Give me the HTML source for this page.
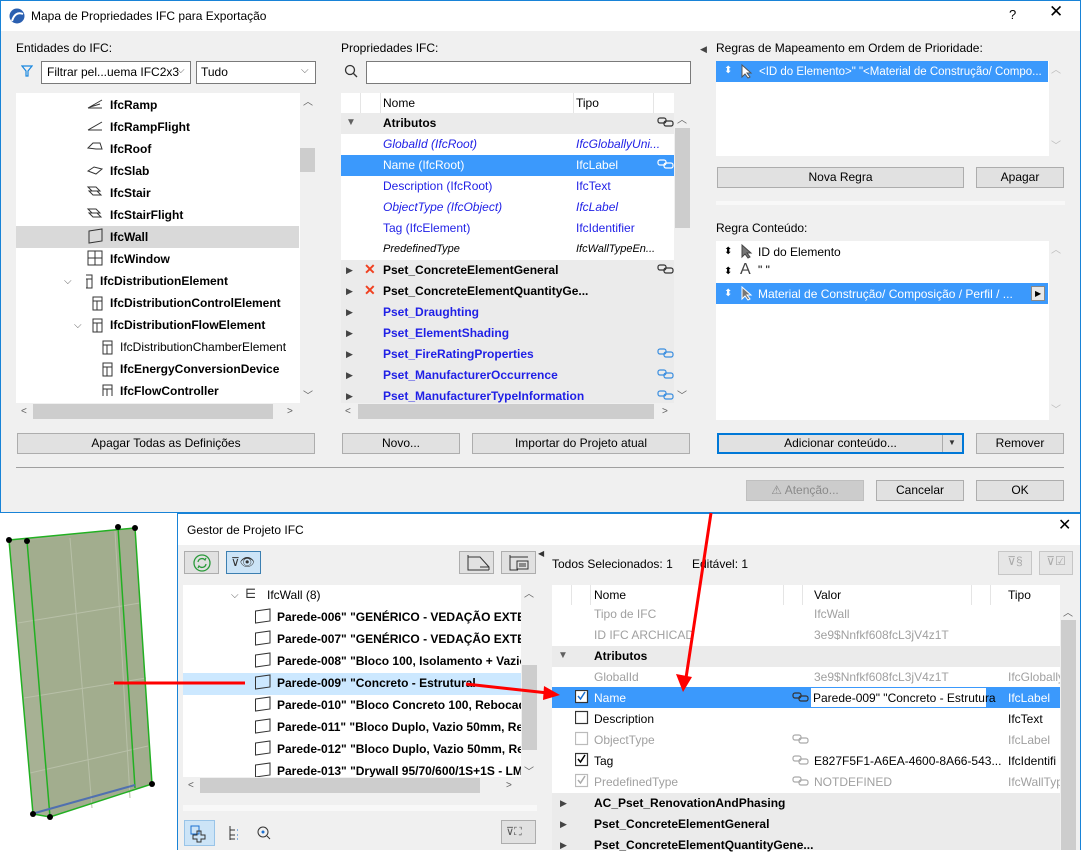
<!DOCTYPE html>
<html><head><meta charset="utf-8"><style>
*{margin:0;padding:0;box-sizing:border-box}
body{width:1081px;height:850px;position:relative;overflow:hidden;background:#fff;font-family:"Liberation Sans",sans-serif;font-size:12px;color:#000}
div,span{position:absolute}
.t{white-space:nowrap;line-height:14px}
.b{font-weight:bold}
.btn{background:#e1e1e1;border:1px solid #adadad;text-align:center;line-height:18px;white-space:nowrap}
.wh{background:#fff}
.bl{color:#1f1fe6}
.gr{color:#a0a0a0}
.sel{background:#3b99fc}
.sb{background:#f0f0f0}
.th{background:#cdcdcd}
.ar{font-size:10px;color:#606060}
</style></head><body>
<!-- top dialog -->
<div style="left:0;top:0;width:1081px;height:513px;background:#f0f0f0;border:1px solid #1883d7"></div>
<div class="wh" style="left:1px;top:1px;width:1079px;height:30px"></div>
<svg style="position:absolute;left:9px;top:8px" width="16" height="16"><circle cx="8" cy="8" r="7.5" fill="#2a5fb0"/><path d="M3 13 Q6 3 14 6" stroke="#fff" stroke-width="2" fill="none"/></svg>
<div class="t" style="left:31px;top:9px;font-size:12px">Mapa de Propriedades IFC para Exportação</div>
<div class="t" style="left:1009px;top:8px;font-size:13px">?</div>
<div class="t" style="left:1049px;top:5px;font-size:17px">✕</div>

<div class="t" style="left:16px;top:41px">Entidades do IFC:</div>
<svg style="position:absolute;left:21px;top:65px" width="12" height="12"><path d="M1 1H11L7 6V11H5V6Z" fill="none" stroke="#1a88e0" stroke-width="1.2"/></svg>
<div class="wh" style="left:41px;top:61px;width:150px;height:23px;border:1px solid #7a7a7a"></div>
<div class="t" style="left:47px;top:65px">Filtrar pel...uema IFC2x3</div>
<div class="t ar" style="left:177px;top:64px">⌵</div>
<div class="wh" style="left:196px;top:61px;width:120px;height:23px;border:1px solid #7a7a7a"></div>
<div class="t" style="left:201px;top:65px">Tudo</div>
<div class="t ar" style="left:301px;top:64px">⌵</div>

<div class="wh" style="left:16px;top:93px;width:284px;height:310px"></div>
<div style="left:16px;top:226px;width:283px;height:22px;background:#d9d9d9"></div>
<div class="sb" style="left:300px;top:93px;width:15px;height:310px"></div>
<div class="th" style="left:300px;top:148px;width:15px;height:24px"></div>
<div class="t ar" style="left:303px;top:96px">︿</div>
<div class="t ar" style="left:303px;top:390px">﹀</div>
<div class="sb" style="left:16px;top:403px;width:299px;height:17px"></div>
<div class="th" style="left:33px;top:404px;width:240px;height:15px"></div>
<div class="t ar" style="left:21px;top:405px">&lt;</div>
<div class="t ar" style="left:287px;top:405px">&gt;</div>

<div class="t b" style="left:110px;top:98px">IfcRamp</div>
<div class="t b" style="left:110px;top:120px">IfcRampFlight</div>
<div class="t b" style="left:110px;top:142px">IfcRoof</div>
<div class="t b" style="left:110px;top:164px">IfcSlab</div>
<div class="t b" style="left:110px;top:186px">IfcStair</div>
<div class="t b" style="left:110px;top:208px">IfcStairFlight</div>
<div class="t b" style="left:110px;top:230px">IfcWall</div>
<div class="t b" style="left:110px;top:252px">IfcWindow</div>
<div class="t b" style="left:100px;top:274px">IfcDistributionElement</div>
<div class="t b" style="left:110px;top:296px">IfcDistributionControlElement</div>
<div class="t b" style="left:110px;top:318px">IfcDistributionFlowElement</div>
<div class="t" style="left:120px;top:340px">IfcDistributionChamberElement</div>
<div class="t b" style="left:120px;top:362px">IfcEnergyConversionDevice</div>
<div class="t b" style="left:120px;top:384px">IfcFlowController</div>
<div class="t ar" style="left:64px;top:275px">⌵</div>
<div class="t ar" style="left:74px;top:319px">⌵</div>
<svg style="position:absolute;left:86px;top:96px" width="30" height="300" fill="none" stroke="#333" stroke-width="1">
<path d="M2 12L16 4M2 12H16M4 11L14 8"/><path d="M2 34L16 26M2 34H16"/>
<path d="M2 52L7 47H14L16 53H10Z"/><path d="M2 75L8 71L16 73L10 78Z"/>
<path d="M2 91H10L14 95H6ZM3 95H11L15 99H7Z"/><path d="M2 113H10L14 117H6ZM3 117H11L15 121H7Z"/>
<path d="M3 135L16 133V145L3 147Z"/><path d="M2 155H16V169H2ZM9 155V169M2 162H16"/>
<path d="M-3 179H6V192H-3ZM-3 183H6M1 183V192"/>
<path d="M7 201H16V214H7ZM7 205H16M11 205V214"/>
<path d="M7 223H16V236H7ZM7 227H16M11 227V236"/>
<path d="M17 245H26V258H17ZM17 249H26M21 249V258"/>
<path d="M17 267H26V280H17ZM17 271H26M21 271V280"/>
<path d="M17 289H26V302H17ZM17 293H26M21 293V302"/></svg>
<div class="btn" style="left:17px;top:433px;width:298px;height:21px">Apagar Todas as Definições</div>
<div style="left:16px;top:467px;width:1048px;height:1px;background:#a0a0a0"></div>

<!-- middle -->
<div class="t" style="left:341px;top:41px">Propriedades IFC:</div>
<svg style="position:absolute;left:344px;top:64px" width="14" height="14" fill="none" stroke="#333" stroke-width="1.3"><circle cx="6" cy="6" r="4.5"/><path d="M9.5 9.5L13 13"/></svg>
<div class="wh" style="left:366px;top:61px;width:325px;height:23px;border:1px solid #7a7a7a"></div>
<div class="wh" style="left:341px;top:93px;width:333px;height:20px"></div>
<div style="left:360px;top:93px;width:1px;height:20px;background:#e5e5e5"></div>
<div style="left:380px;top:93px;width:1px;height:20px;background:#e5e5e5"></div>
<div style="left:573px;top:93px;width:1px;height:20px;background:#e5e5e5"></div>
<div style="left:653px;top:93px;width:1px;height:20px;background:#e5e5e5"></div>
<div class="t" style="left:383px;top:96px">Nome</div>
<div class="t" style="left:576px;top:96px">Tipo</div>
<div style="left:341px;top:113px;width:333px;height:21px;background:#ebebeb"></div>
<div class="wh" style="left:341px;top:134px;width:333px;height:126px"></div>
<div class="sel" style="left:341px;top:155px;width:333px;height:21px"></div>
<div style="left:341px;top:260px;width:333px;height:143px;background:#ebebeb"></div>
<div class="t ar" style="left:346px;top:116px">▼</div>
<div class="t b" style="left:383px;top:116px">Atributos</div>
<div class="t bl" style="left:383px;top:137px;font-style:italic">GlobalId (IfcRoot)</div>
<div class="t bl" style="left:576px;top:137px;font-style:italic">IfcGloballyUni...</div>
<div class="t" style="left:383px;top:158px;color:#fff">Name (IfcRoot)</div>
<div class="t" style="left:576px;top:158px;color:#fff">IfcLabel</div>
<div class="t bl" style="left:383px;top:179px">Description (IfcRoot)</div>
<div class="t bl" style="left:576px;top:179px">IfcText</div>
<div class="t bl" style="left:383px;top:200px;font-style:italic">ObjectType (IfcObject)</div>
<div class="t bl" style="left:576px;top:200px;font-style:italic">IfcLabel</div>
<div class="t bl" style="left:383px;top:221px">Tag (IfcElement)</div>
<div class="t bl" style="left:576px;top:221px">IfcIdentifier</div>
<div class="t" style="left:383px;top:242px;font-style:italic;font-size:11px">PredefinedType</div>
<div class="t" style="left:576px;top:242px;font-style:italic;font-size:11px">IfcWallTypeEn...</div>
<div class="t b" style="left:383px;top:263px">Pset_ConcreteElementGeneral</div>
<div class="t b" style="left:383px;top:284px">Pset_ConcreteElementQuantityGe...</div>
<div class="t b bl" style="left:383px;top:305px">Pset_Draughting</div>
<div class="t b bl" style="left:383px;top:326px">Pset_ElementShading</div>
<div class="t b bl" style="left:383px;top:347px">Pset_FireRatingProperties</div>
<div class="t b bl" style="left:383px;top:368px">Pset_ManufacturerOccurrence</div>
<div class="t b bl" style="left:383px;top:389px">Pset_ManufacturerTypeInformation</div>
<div class="t" style="left:346px;top:263px;font-size:9px;color:#444">▶</div>
<div class="t" style="left:346px;top:284px;font-size:9px;color:#444">▶</div>
<div class="t" style="left:346px;top:305px;font-size:9px;color:#444">▶</div>
<div class="t" style="left:346px;top:326px;font-size:9px;color:#444">▶</div>
<div class="t" style="left:346px;top:347px;font-size:9px;color:#444">▶</div>
<div class="t" style="left:346px;top:368px;font-size:9px;color:#444">▶</div>
<div class="t" style="left:346px;top:389px;font-size:9px;color:#444">▶</div>
<div class="t b" style="left:364px;top:262px;color:#f04020;font-size:14px">✕</div>
<div class="t b" style="left:364px;top:283px;color:#f04020;font-size:14px">✕</div>
<svg style="position:absolute;left:657px;top:115px" width="18" height="290" fill="none" stroke-width="1.2">
<g stroke="#333"><rect x="1" y="3" width="8" height="5" rx="2"/><rect x="7" y="6" width="9" height="5" rx="2"/></g>
<g stroke="#fff" transform="translate(0,42)"><rect x="1" y="3" width="8" height="5" rx="2"/><rect x="7" y="6" width="9" height="5" rx="2"/></g>
<g stroke="#333" transform="translate(0,147)"><rect x="1" y="3" width="8" height="5" rx="2"/><rect x="7" y="6" width="9" height="5" rx="2"/></g>
<g stroke="#3a8ee0" transform="translate(0,231)"><rect x="1" y="3" width="8" height="5" rx="2"/><rect x="7" y="6" width="9" height="5" rx="2"/></g>
<g stroke="#3a8ee0" transform="translate(0,252)"><rect x="1" y="3" width="8" height="5" rx="2"/><rect x="7" y="6" width="9" height="5" rx="2"/></g>
<g stroke="#3a8ee0" transform="translate(0,273)"><rect x="1" y="3" width="8" height="5" rx="2"/><rect x="7" y="6" width="9" height="5" rx="2"/></g></svg>
<div class="sb" style="left:674px;top:113px;width:16px;height:290px"></div>
<div class="th" style="left:675px;top:128px;width:15px;height:100px"></div>
<div class="t ar" style="left:677px;top:114px">︿</div>
<div class="t ar" style="left:677px;top:390px">﹀</div>
<div class="sb" style="left:341px;top:403px;width:349px;height:17px"></div>
<div class="th" style="left:358px;top:404px;width:296px;height:15px"></div>
<div class="t ar" style="left:345px;top:405px">&lt;</div>
<div class="t ar" style="left:662px;top:405px">&gt;</div>
<div class="btn" style="left:342px;top:433px;width:118px;height:21px">Novo...</div>
<div class="btn" style="left:472px;top:433px;width:218px;height:21px">Importar do Projeto atual</div>

<!-- right -->
<div class="t" style="left:700px;top:42px;font-size:9px;color:#444">◀</div>
<div class="t" style="left:716px;top:41px">Regras de Mapeamento em Ordem de Prioridade:</div>
<div class="wh" style="left:716px;top:61px;width:333px;height:95px"></div>
<div class="sel" style="left:716px;top:61px;width:332px;height:21px"></div>
<div class="t" style="left:724px;top:64px;color:#fff;font-size:10px">⬍</div>
<div class="t" style="left:759px;top:65px;color:#fff;font-size:11.5px">&lt;ID do Elemento&gt;" "&lt;Material de Construção/ Compo...</div>
<div class="t" style="left:1051px;top:64px;color:#bbb;font-size:10px">︿</div>
<div class="t" style="left:1051px;top:140px;color:#bbb;font-size:10px">﹀</div>
<div class="btn" style="left:717px;top:167px;width:247px;height:21px">Nova Regra</div>
<div class="btn" style="left:976px;top:167px;width:88px;height:21px">Apagar</div>
<div style="left:716px;top:201px;width:349px;height:4px;background:#f8f8f8"></div>
<div class="t" style="left:716px;top:221px">Regra Conteúdo:</div>
<div class="wh" style="left:716px;top:241px;width:333px;height:179px"></div>
<div class="sel" style="left:716px;top:283px;width:332px;height:21px"></div>
<div class="t" style="left:724px;top:245px;font-size:10px">⬍</div>
<div class="t" style="left:724px;top:265px;font-size:10px">⬍</div>
<div class="t" style="left:724px;top:287px;font-size:10px;color:#fff">⬍</div>
<div class="t" style="left:758px;top:245px">ID do Elemento</div>
<div class="t" style="left:740px;top:263px;font-size:16px;color:#444">A</div>
<div class="t" style="left:758px;top:263px">" "</div>
<div class="t" style="left:758px;top:287px;color:#fff">Material de Construção/ Composição / Perfil / ...</div>
<div style="left:1031px;top:286px;width:14px;height:15px;background:#e8e8e8;border:1px solid #888"></div>
<div class="t" style="left:1035px;top:287px;font-size:8px">▶</div>
<svg style="position:absolute;left:740px;top:63px" width="16" height="240"><path d="M2 2V14L5 11L8 15L10 14L7 10H11Z" fill="#fff" stroke="#555"/><path d="M2 182V194L5 191L8 195L10 194L7 190H11Z" fill="#777" stroke="#444"/><path d="M2 224V236L5 233L8 237L10 236L7 232H11Z" fill="#777" stroke="#fff"/></svg>
<div class="t" style="left:1051px;top:244px;color:#bbb;font-size:10px">︿</div>
<div class="t" style="left:1051px;top:404px;color:#bbb;font-size:10px">﹀</div>
<div class="btn" style="left:717px;top:433px;width:247px;height:21px;border:2px solid #0078d7;line-height:17px">Adicionar conteúdo...</div>
<div style="left:942px;top:435px;width:1px;height:17px;background:#aaa"></div>
<div class="t" style="left:948px;top:436px;font-size:8px;color:#333">▼</div>
<div class="btn" style="left:976px;top:433px;width:88px;height:21px">Remover</div>
<div class="btn" style="left:746px;top:480px;width:118px;height:21px;background:#ccc;border-color:#bfbfbf;color:#8a8a8a">⚠ Atenção...</div>
<div class="btn" style="left:876px;top:480px;width:88px;height:21px">Cancelar</div>
<div class="btn" style="left:976px;top:480px;width:88px;height:21px">OK</div>

<!-- wall 3D -->
<svg style="position:absolute;left:0;top:513px" width="176" height="337">
<polygon points="9,27 135,15 152,271 50,304 33,301" fill="#a7b194"/>
<polygon points="27,28 135,15 152,271 50,304" fill="#a2ad8e"/>
<g stroke="#b8c0a8" stroke-width="1" fill="none"><path d="M18,110 L140,90M24,185L146,165M30,260L148,233M70,25L92,295M115,18L130,285"/></g>
<g stroke="#22b022" stroke-width="1.5" fill="none"><polygon points="9,27 135,15 152,271 50,304 33,301"/><path d="M27,28L50,304M118,14L135,275"/></g>
<path d="M35,300L135,272" stroke="#5070b0" stroke-width="2"/>
<g fill="#000"><circle cx="9" cy="27" r="3"/><circle cx="27" cy="28" r="3"/><circle cx="118" cy="14" r="3"/><circle cx="135" cy="15" r="3"/><circle cx="152" cy="271" r="3"/><circle cx="50" cy="304" r="3"/><circle cx="33" cy="301" r="3"/></g></svg>

<!-- bottom window -->
<div style="left:177px;top:513px;width:904px;height:337px;background:#f0f0f0;border:1px solid #1883d7;border-bottom:none"></div>
<div class="wh" style="left:178px;top:514px;width:902px;height:31px"></div>
<div class="t" style="left:187px;top:523px">Gestor de Projeto IFC</div>
<div class="t" style="left:1058px;top:519px;font-size:16px">✕</div>
<div class="btn" style="left:184px;top:551px;width:35px;height:23px"></div>
<svg style="position:absolute;left:193px;top:554px" width="18" height="18" fill="none" stroke="#2a9a3a" stroke-width="1.3"><circle cx="9" cy="9" r="8"/><path d="M5 8A4 4 0 0 1 12 6L13 4M13 10A4 4 0 0 1 6 12L5 14"/></svg>
<div class="btn" style="left:226px;top:551px;width:35px;height:23px;background:#cce4f7;border-color:#3c7fb1"></div>
<div class="t" style="left:231px;top:555px;font-size:12px;color:#333">⊽👁</div>
<div class="btn" style="left:459px;top:551px;width:35px;height:23px"></div>
<div class="btn" style="left:501px;top:551px;width:35px;height:23px"></div>
<svg style="position:absolute;left:464px;top:553px" width="70" height="20" fill="none" stroke="#333"><path d="M4 2V17H25M4 4H16L25 14V17M16 14H25"/><path d="M46 2V17H54M46 4H64M53 8H64V16H53ZM55 11H62M55 13H62"/></svg>
<div style="left:183px;top:585px;width:338px;height:192px;overflow:hidden;background:#fff">
<div style="left:0;top:88px;width:338px;height:22px;background:#cce8ff"></div>
<div class="t ar" style="left:48px;top:4px">⌵</div>
<div class="t" style="left:62px;top:2px;font-size:13px;color:#333">⋿</div>
<div class="t" style="left:84px;top:3px">IfcWall (8)</div>
<div class="t b" style="left:94px;top:25px">Parede-006" "GENÉRICO - VEDAÇÃO EXTERNA</div>
<div class="t b" style="left:94px;top:47px">Parede-007" "GENÉRICO - VEDAÇÃO EXTERNA</div>
<div class="t b" style="left:94px;top:69px">Parede-008" "Bloco 100, Isolamento + Vazio</div>
<div class="t b" style="left:94px;top:91px">Parede-009" "Concreto - Estrutural</div>
<div class="t b" style="left:94px;top:113px">Parede-010" "Bloco Concreto 100, Rebocado 2 I</div>
<div class="t b" style="left:94px;top:135px">Parede-011" "Bloco Duplo, Vazio 50mm, Reboca</div>
<div class="t b" style="left:94px;top:157px">Parede-012" "Bloco Duplo, Vazio 50mm, Reboca</div>
<div class="t b" style="left:94px;top:179px">Parede-013" "Drywall 95/70/600/1S+1S - LM</div>
<svg style="position:absolute;left:71px;top:22px" width="18" height="170" fill="none" stroke="#333"><g id="w"><path d="M1.5 4L16 2V14L1.5 16Z"/></g><use href="#w" y="22"/><use href="#w" y="44"/><use href="#w" y="66"/><use href="#w" y="88"/><use href="#w" y="110"/><use href="#w" y="132"/><use href="#w" y="154"/></svg>
</div>
<div class="sb" style="left:521px;top:585px;width:16px;height:192px"></div>
<div class="th" style="left:522px;top:665px;width:15px;height:85px"></div>
<div class="t ar" style="left:524px;top:588px">︿</div>
<div class="t ar" style="left:524px;top:766px">﹀</div>
<div class="sb" style="left:183px;top:777px;width:354px;height:17px"></div>
<div class="th" style="left:200px;top:778px;width:280px;height:15px"></div>
<div class="t ar" style="left:188px;top:779px">&lt;</div>
<div class="t ar" style="left:506px;top:779px">&gt;</div>
<div style="left:183px;top:805px;width:354px;height:6px;background:#f8f8f8"></div>
<div class="btn" style="left:184px;top:820px;width:31px;height:26px;background:#cce4f7;border-color:#99c4e8"></div>
<svg style="position:absolute;left:188px;top:823px" width="100" height="20" fill="none" stroke="#333"><path d="M3 3H11V11H3Z" stroke="#1a6fd0"/><path d="M9 8H13V12H17V16H13V19H9V16H5V12H9Z"/><path d="M42 3V17M42 7H47M42 12H47M42 16H47"/><path d="M49 7H50M49 12H50M49 16H50" stroke="#1a6fd0"/><circle cx="75" cy="9" r="5"/><circle cx="75" cy="9" r="1.5" fill="#1a6fd0" stroke="none"/><path d="M79 13L82 16"/></svg>
<div class="btn" style="left:501px;top:820px;width:35px;height:24px"></div>
<div class="t" style="left:506px;top:825px;font-size:11px;color:#555">⊽⛶</div>

<div style="left:537px;top:545px;width:15px;height:305px;background:#f0f0f0"></div>
<div class="t" style="left:538px;top:547px;font-size:8px;color:#333">◀</div>
<div class="t" style="left:552px;top:557px">Todos Selecionados: 1</div>
<div class="t" style="left:692px;top:557px">Editável: 1</div>
<div class="btn" style="left:998px;top:551px;width:34px;height:24px;background:#e6e6e6;border-color:#c6c6c6;color:#aaa">⊽§</div>
<div class="btn" style="left:1039px;top:551px;width:34px;height:24px;background:#e6e6e6;border-color:#c6c6c6;color:#aaa">⊽☑</div>
<div class="wh" style="left:552px;top:585px;width:508px;height:20px"></div>
<div style="left:571px;top:585px;width:1px;height:20px;background:#e5e5e5"></div>
<div style="left:590px;top:585px;width:1px;height:20px;background:#e5e5e5"></div>
<div style="left:783px;top:585px;width:1px;height:20px;background:#e5e5e5"></div>
<div style="left:802px;top:585px;width:1px;height:20px;background:#e5e5e5"></div>
<div style="left:971px;top:585px;width:1px;height:20px;background:#e5e5e5"></div>
<div style="left:990px;top:585px;width:1px;height:20px;background:#e5e5e5"></div>
<div class="t" style="left:594px;top:588px">Nome</div>
<div class="t" style="left:814px;top:588px">Valor</div>
<div class="t" style="left:1008px;top:588px">Tipo</div>
<div class="wh" style="left:552px;top:605px;width:508px;height:41px"></div>
<div style="left:552px;top:646px;width:508px;height:21px;background:#ebebeb"></div>
<div class="wh" style="left:552px;top:667px;width:508px;height:126px"></div>
<div class="sel" style="left:552px;top:687px;width:508px;height:21px"></div>
<div style="left:552px;top:793px;width:508px;height:57px;background:#ebebeb"></div>
<div class="t gr" style="left:594px;top:607px">Tipo de IFC</div>
<div class="t gr" style="left:814px;top:607px">IfcWall</div>
<div class="t gr" style="left:594px;top:628px">ID IFC ARCHICAD</div>
<div class="t gr" style="left:814px;top:628px">3e9$Nnfkf608fcL3jV4z1T</div>
<div class="t ar" style="left:558px;top:649px">▼</div>
<div class="t b" style="left:594px;top:649px">Atributos</div>
<div class="t gr" style="left:594px;top:670px">GlobalId</div>
<div class="t gr" style="left:814px;top:670px">3e9$Nnfkf608fcL3jV4z1T</div>
<div class="t gr" style="left:1008px;top:670px">IfcGlobally</div>
<div class="t" style="left:594px;top:691px;color:#fff">Name</div>
<div class="wh" style="left:811px;top:688px;width:175px;height:19px"></div>
<div class="t" style="left:813px;top:691px">Parede-009" "Concreto - Estrutura</div>
<div class="t" style="left:1008px;top:691px;color:#fff">IfcLabel</div>
<div class="t" style="left:594px;top:712px">Description</div>
<div class="t" style="left:1008px;top:712px">IfcText</div>
<div class="t gr" style="left:594px;top:733px">ObjectType</div>
<div class="t gr" style="left:1008px;top:733px">IfcLabel</div>
<div class="t" style="left:594px;top:754px">Tag</div>
<div class="t" style="left:814px;top:754px">E827F5F1-A6EA-4600-8A66-543...</div>
<div class="t" style="left:1008px;top:754px">IfcIdentifi</div>
<div class="t gr" style="left:594px;top:775px">PredefinedType</div>
<div class="t gr" style="left:814px;top:775px">NOTDEFINED</div>
<div class="t gr" style="left:1008px;top:775px">IfcWallTyp</div>
<div class="t b" style="left:594px;top:796px">AC_Pset_RenovationAndPhasing</div>
<div class="t b" style="left:594px;top:817px">Pset_ConcreteElementGeneral</div>
<div class="t b" style="left:594px;top:838px">Pset_ConcreteElementQuantityGene...</div>
<div class="t" style="left:560px;top:796px;font-size:9px;color:#444">▶</div>
<div class="t" style="left:560px;top:817px;font-size:9px;color:#444">▶</div>
<div class="t" style="left:560px;top:838px;font-size:9px;color:#444">▶</div>
<svg style="position:absolute;left:575px;top:690px" width="240" height="110" fill="none" stroke-width="1.2">
<rect x="0.5" y="0.5" width="12" height="12" fill="#fff" stroke="#333"/><path d="M3 6L5.5 9L10 2" stroke="#1a6fd0" stroke-width="1.5"/>
<rect x="0.5" y="21.5" width="12" height="12" fill="#fff" stroke="#333"/>
<rect x="0.5" y="42.5" width="12" height="12" stroke="#bbb"/>
<rect x="0.5" y="63.5" width="12" height="12" stroke="#333"/><path d="M3 69L5.5 72L10 65" stroke="#000" stroke-width="1.5"/>
<rect x="0.5" y="84.5" width="12" height="12" stroke="#bbb"/><path d="M3 90L5.5 93L10 86" stroke="#aaa" stroke-width="1.5"/>
<g stroke="#333"><rect x="218" y="3" width="8" height="5" rx="2"/><rect x="224" y="6" width="9" height="5" rx="2"/></g>
<g stroke="#aaa"><rect x="218" y="45" width="8" height="5" rx="2"/><rect x="224" y="48" width="9" height="5" rx="2"/><rect x="218" y="66" width="8" height="5" rx="2"/><rect x="224" y="69" width="9" height="5" rx="2"/><rect x="218" y="87" width="8" height="5" rx="2"/><rect x="224" y="90" width="9" height="5" rx="2"/></g></svg>
<div class="sb" style="left:1060px;top:605px;width:16px;height:245px"></div>
<div class="th" style="left:1061px;top:620px;width:15px;height:230px"></div>
<div class="t ar" style="left:1063px;top:607px">︿</div>

<!-- red arrows -->
<svg style="position:absolute;left:0;top:0" width="1081" height="850">
<g stroke="#ff0000" stroke-width="3" fill="none"><path d="M114 683H245"/><path d="M466 684L548 693"/><path d="M711 513L686 678"/></g>
<polygon points="560,695 544,686 543,700" fill="#ff0000"/>
<polygon points="683,692 676,674 692,677" fill="#ff0000"/></svg>
</body></html>
